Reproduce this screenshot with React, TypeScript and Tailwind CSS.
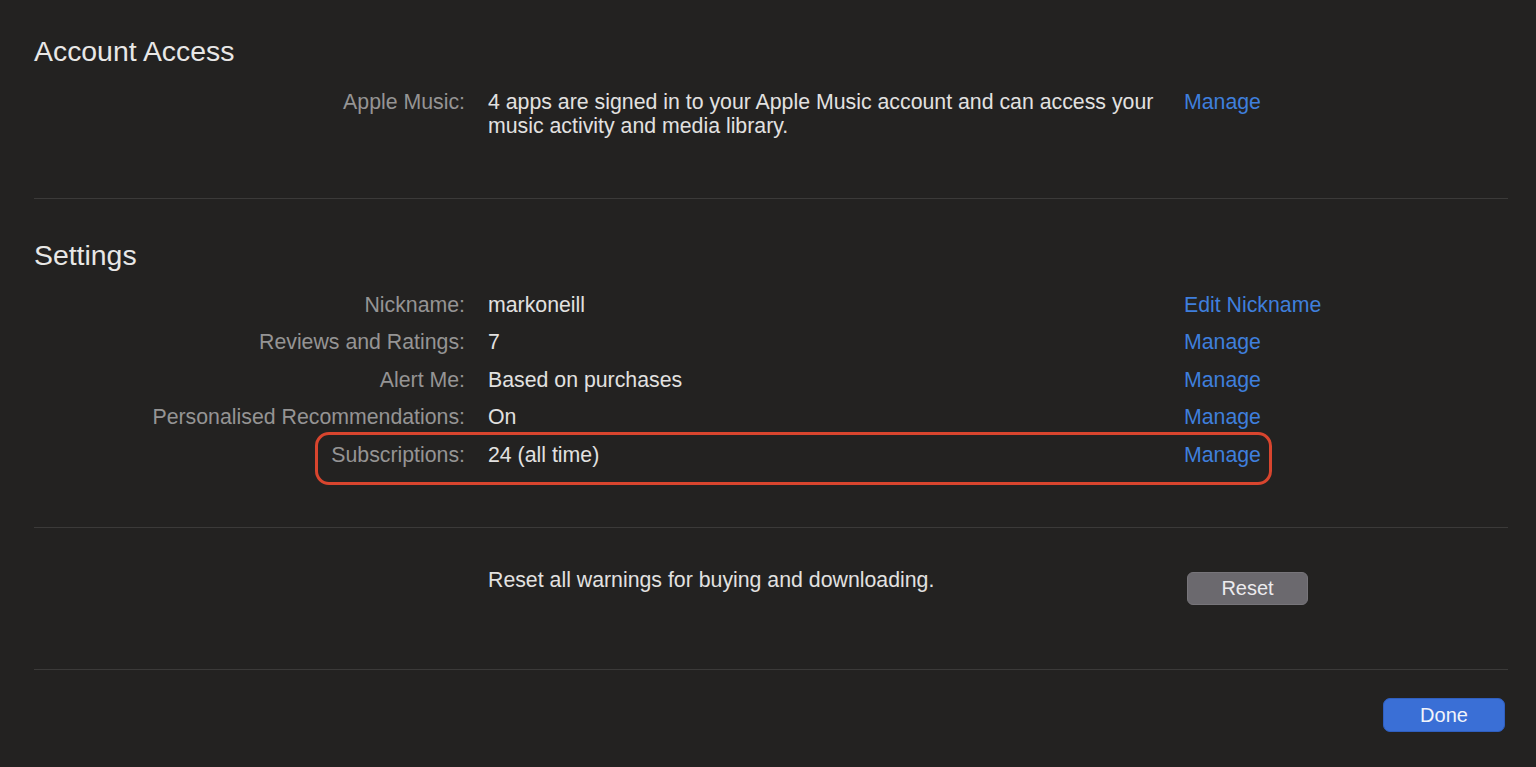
import React from 'react';

type Row = { label: string; value: string; action: string };

const SETTINGS: Row[] = [
    { label: 'Nickname:', value: 'markoneill', action: 'Edit Nickname' },
    { label: 'Reviews and Ratings:', value: '7', action: 'Manage' },
    { label: 'Alert Me:', value: 'Based on purchases', action: 'Manage' },
    { label: 'Personalised Recommendations:', value: 'On', action: 'Manage' },
    { label: 'Subscriptions:', value: '24 (all time)', action: 'Manage' },
];

function Divider() {
    return <div className="h-px bg-[#3b3a39]" />;
}

function SettingRow({ row, highlight }: { row: Row; highlight?: boolean }) {
    return (
        <div className="relative flex items-center h-[37.5px]">
            <div className="w-[454px] pr-[23px] text-right text-[#959494]">{row.label}</div>
            <div className="w-[696px] text-[#e2e1e0]">{row.value}</div>
            <a className="text-[#3f7fdc] cursor-pointer">{row.action}</a>
            {highlight && (
                <div className="absolute left-[281px] top-[-4px] w-[957px] h-[53px] rounded-[14px] border-[3px] border-[#d8452e] pointer-events-none" />
            )}
        </div>
    );
}

export default function App() {
    return (
        <div
            className="min-h-screen bg-[#232221] pl-[34px] pr-[28px] pt-[35px] text-[21.3px] leading-[24px] antialiased"
            style={{ fontFamily: '"Liberation Sans", Arial, sans-serif' }}
        >
            <h2 className="text-[28.4px] leading-[32px] text-[#e8e7e6]">Account Access</h2>

            <div className="flex mt-[23px]">
                <div className="w-[454px] pr-[23px] text-right text-[#959494]">Apple Music:</div>
                <p className="w-[696px] pr-[24px] text-[#e2e1e0]">
                    4 apps are signed in to your Apple Music account and can access your music activity and media library.
                </p>
                <a className="text-[#3f7fdc] cursor-pointer">Manage</a>
            </div>

            <div className="mt-[60px]">
                <Divider />
            </div>

            <h2 className="mt-[40px] text-[28.4px] leading-[32px] text-[#e8e7e6]">Settings</h2>

            <div className="mt-[15px]">
                {SETTINGS.map((row, i) => (
                    <SettingRow key={row.label} row={row} highlight={i === SETTINGS.length - 1} />
                ))}
            </div>

            <div className="mt-[53px]">
                <Divider />
            </div>

            <div className="flex items-start mt-[40px]">
                <div className="w-[454px]" />
                <p className="w-[699px] text-[#e2e1e0]">Reset all warnings for buying and downloading.</p>
                <button className="mt-[4px] w-[121px] h-[33px] rounded-[6px] bg-[#6b696e] border border-[#77757a] text-[20px] text-[#ecebee]">
                    Reset
                </button>
            </div>

            <div className="mt-[64px]">
                <Divider />
            </div>

            <div className="flex justify-end pr-[3px] mt-[28px]">
                <button className="w-[122px] h-[34px] rounded-[7px] bg-[#3a6fd6] border border-[#2f5fc0] text-[20px] text-[#f1f4fb]">
                    Done
                </button>
            </div>
        </div>
    );
}
